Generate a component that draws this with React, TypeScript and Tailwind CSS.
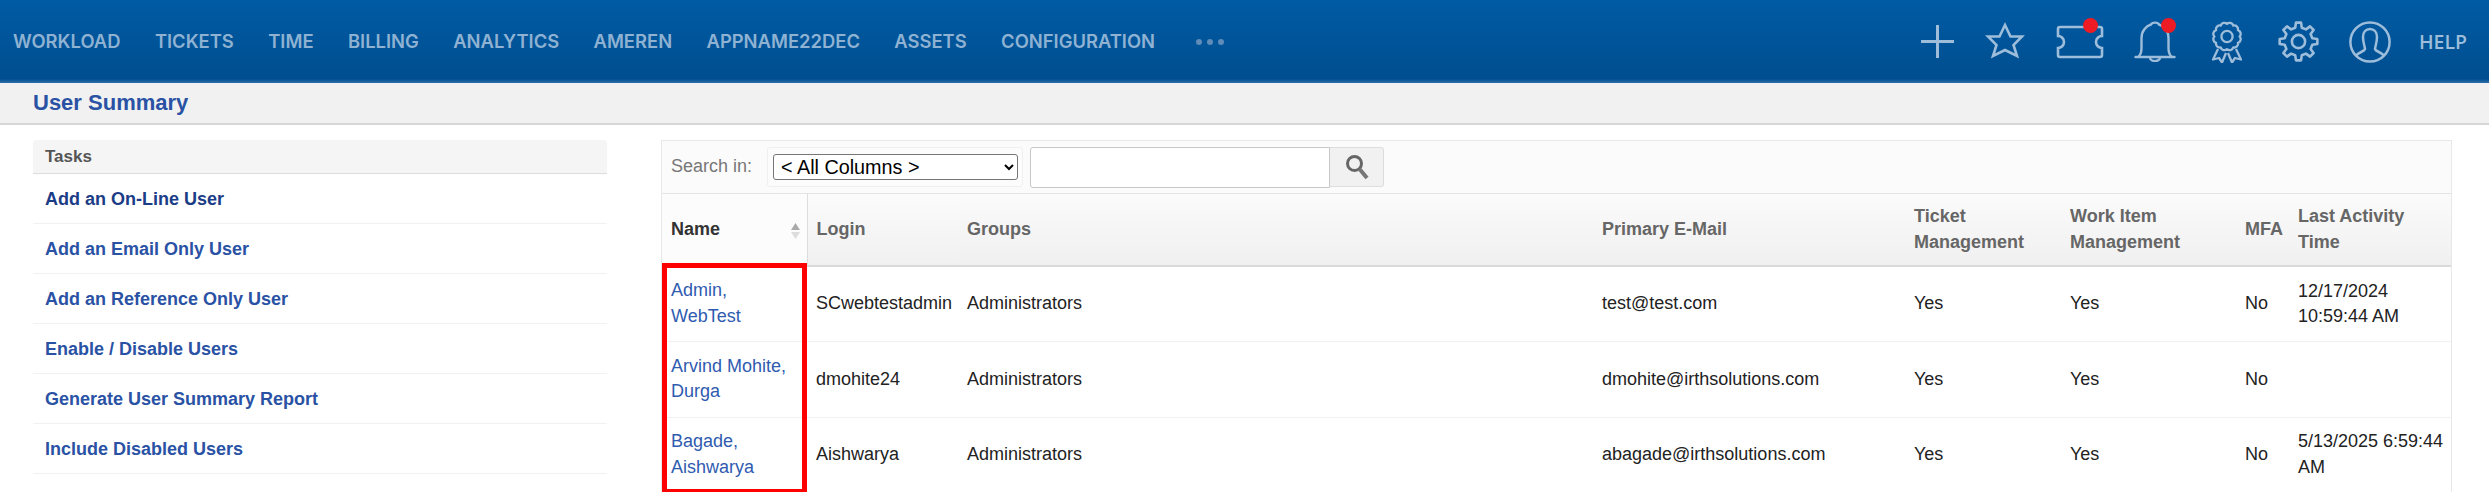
import React from "react"

const navItems = ["WORKLOAD", "TICKETS", "TIME", "BILLING", "ANALYTICS", "AMEREN", "APPNAME22DEC", "ASSETS", "CONFIGURATION"]
const tasks = ["Add an On-Line User", "Add an Email Only User", "Add an Reference Only User", "Enable / Disable Users", "Generate User Summary Report", "Include Disabled Users"]
const users = [
  { name: "Admin, WebTest", login: "SCwebtestadmin", mail: "test@test.com", last: "12/17/2024 10:59:44 AM" },
  { name: "Arvind Mohite, Durga", login: "dmohite24", mail: "dmohite@irthsolutions.com", last: "" },
  { name: "Bagade, Aishwarya", login: "Aishwarya", mail: "abagade@irthsolutions.com", last: "5/13/2025 6:59:44 AM" },
]

// scalloped ring for the award badge
function scallop(cx: number, cy: number, r: number, n: number) {
  let d = ""
  for (let i = 0; i <= n; i++) {
    const a = (i / n) * Math.PI * 2
    const x = (cx + r * Math.cos(a)).toFixed(2)
    const y = (cy + r * Math.sin(a)).toFixed(2)
    d += i == 0 ? `M${x} ${y}` : `A3.8 3.8 0 0 1 ${x} ${y}`
  }
  return d + "Z"
}

function gear(cx: number, cy: number, outer: number, inner: number, n: number) {
  const pts: string[] = []
  const step = (Math.PI * 2) / n
  for (let i = 0; i < n; i++) {
    const a = i * step - Math.PI / 2
    const p = (rad: number, off: number) => `${(cx + rad * Math.cos(a + off)).toFixed(2)} ${(cy + rad * Math.sin(a + off)).toFixed(2)}`
    pts.push(p(inner, -step * 0.3), p(outer, -step * 0.17), p(outer, step * 0.17), p(inner, step * 0.3))
  }
  return "M" + pts.join("L") + "Z"
}

const iconCls = "fill-none stroke-[#9dbdda] block"

function RedDot({ cls }: { cls: string }) {
  return <span className={"absolute w-[15px] h-[15px] rounded-full bg-[#ed1c24] " + cls}></span>
}

function HeaderIcons() {
  return (
    <div className="flex items-center ml-auto pr-[22px]">
      <svg width="33" height="33" viewBox="0 0 33 33" className={iconCls} strokeWidth="3">
        <path d="M16.5 0V33M0 16.5H33" />
      </svg>
      <svg width="40" height="37" viewBox="0 0 40 37" className={iconCls + " ml-[31px] -mt-[2px]"} strokeWidth="2.6" strokeLinejoin="miter">
        <path d="M20 3L25.5 14.5H37L28.5 23L32 34L20 28L8 34L11.5 23L3 14.5H14.5Z" />
      </svg>
      <div className="relative ml-[31px]">
        <svg width="48" height="34" viewBox="0 0 48 34" className={iconCls} strokeWidth="2.6">
          <path d="M4 2H44a2 2 0 0 1 2 2V11a6 6 0 0 0 0 12V30a2 2 0 0 1-2 2H4a2 2 0 0 1-2-2V23a6 6 0 0 0 0-12V4a2 2 0 0 1 2-2Z" />
        </svg>
        <RedDot cls="left-[27px] -top-[7px]" />
      </div>
      <div className="relative ml-[30px]">
        <svg width="42" height="41" viewBox="0 0 42 41" className={iconCls} strokeWidth="2.4" strokeLinecap="round">
          <path d="M5 35C7 33 7.5 30 7.5 27V17C7.5 10 12 5 17 3.5C18 1 24 1 25 3.5C30 5 34.5 10 34.5 17V27C34.5 30 35 33 37 35" />
          <path d="M1.5 36H40.5" />
          <path d="M16 36.5a5 3.6 0 0 0 10 0" />
        </svg>
        <RedDot cls="left-[27px] -top-[3px]" />
      </div>
      <svg width="30" height="42" viewBox="0 0 30 42" className={iconCls + " ml-[36px]"} strokeWidth="2.3" strokeLinejoin="round">
        <path d={scallop(15, 15.5, 12.6, 12)} />
        <circle cx="15" cy="15.5" r="5.6" />
        <path d="M6 28L1 38.5L7 37L10 41.5L14 32" />
        <path d="M24 28L29 38.5L23 37L20 41.5L16 32" />
      </svg>
      <svg width="41" height="41" viewBox="0 0 41 41" className={iconCls + " ml-[36px]"} strokeWidth="2.6" strokeLinejoin="round">
        <path d={gear(20.5, 20.5, 19, 14.2, 8)} />
        <circle cx="20.5" cy="20.5" r="6.6" />
      </svg>
      <svg width="42" height="42" viewBox="0 0 42 42" className={iconCls + " ml-[30px]"} strokeWidth="2.5">
        <circle cx="21" cy="21" r="19.6" />
        <path d="M7 35C9 31 15 31 16 28C16 26 14 22 14 16C14 11 17 8 21 8C25 8 28 11 28 16C28 22 26 26 26 28C27 31 33 31 35 35" />
      </svg>
      <span className="ml-[28px] text-[19.5px] font-semibold text-[#9dbdda] font-['Open_Sans',sans-serif]">HELP</span>
    </div>
  )
}

function SearchBar() {
  return (
    <div className="h-[53px] flex items-center pl-[9px] bg-[#fbfbfb] border-b border-[#e4e4e4]">
      <span className="text-[#777777] w-[96px]">Search in:</span>
      <div className="w-[256px] h-[40px] flex items-center pl-[5px] bg-[#fcfcfc] border border-[#f0f0f0] rounded-[3px]">
        <select className="w-[245px] h-[26px] pl-[3px] bg-white text-black border border-[#767676] rounded-[3px] text-[19.8px] font-['Liberation_Sans',Arial,sans-serif]">
          <option>{"< All Columns >"}</option>
        </select>
      </div>
      <div className="ml-[7px] w-[300px] h-[41px] bg-white border border-[#c8c8c8] rounded-l-[3px]"></div>
      <div className="w-[54px] h-[40px] flex items-center justify-center bg-[#f1f1f1] border border-l-0 border-[#dddddd] rounded-r-[3px]">
        <svg width="24" height="26" viewBox="0 0 24 26" fill="none" className="block">
          <circle cx="9.5" cy="9.5" r="7" stroke="#666666" strokeWidth="3" />
          <path d="M14.5 15L22 24" stroke="#777777" strokeWidth="4" />
        </svg>
      </div>
    </div>
  )
}

function UsersTable() {
  const th = "px-[9px] pr-[14px] text-left align-middle font-bold text-[#666666] bg-[linear-gradient(#fbfbfb,#f0f0f0)] border-b-2 border-[#d9d9d9]"
  const td = "pl-[9px] pr-[2px] align-middle border-b border-[#f1f1f1] text-[#222222]"
  return (
    <table className="w-full table-fixed border-collapse">
      <colgroup>
        <col className="w-[145px]" />
        <col className="w-[151px]" />
        <col className="w-[635px]" />
        <col className="w-[312px]" />
        <col className="w-[156px]" />
        <col className="w-[175px]" />
        <col className="w-[53px]" />
        <col />
      </colgroup>
      <thead>
        <tr className="h-[72px]">
          <th className="relative px-[9px] text-left font-bold text-[#333333] bg-[#fcfcfc] border-r border-[#dddddd]">
            Name
            <svg width="9" height="16" viewBox="0 0 9 16" className="absolute right-[7px] top-[29px]">
              <path d="M4.5 0L9 7H0Z" fill="#aaaaaa" />
              <path d="M4.5 16L9 9H0Z" fill="#dddddd" />
            </svg>
          </th>
          <th className={th}>Login</th>
          <th className={th}>Groups</th>
          <th className={th}>Primary E-Mail</th>
          <th className={th}>Ticket Management</th>
          <th className={th}>Work Item Management</th>
          <th className={th + " !pr-0"}>MFA</th>
          <th className={th}>Last Activity Time</th>
        </tr>
      </thead>
      <tbody>
        {users.map((u) => (
          <tr key={u.login} className="h-[75.5px]">
            <td className={td + " !pr-[9px] !text-[#2f5bb0]"}>{u.name}</td>
            <td className={td}>{u.login}</td>
            <td className={td}>Administrators</td>
            <td className={td}>{u.mail}</td>
            <td className={td}>Yes</td>
            <td className={td}>Yes</td>
            <td className={td}>No</td>
            <td className={td}>{u.last}</td>
          </tr>
        ))}
      </tbody>
    </table>
  )
}

export default function App() {
  return (
    <div className="w-[2489px] h-[492px] overflow-hidden bg-white text-[18px] leading-[25.4px] font-['Liberation_Sans',Arial,sans-serif]">
      <header className="h-[83px] flex items-center bg-[linear-gradient(#005ba4_0px,#004e8f_79px,#2f70ac_83px)]">
        <nav className="flex items-center gap-[34.4px] pl-[13px]">
          {navItems.map((n) => (
            <span key={n} className="text-[18.4px] font-semibold text-[#8fb2d3] font-['Inter',sans-serif]">{n}</span>
          ))}
          <span className="flex gap-[5px] ml-[7px]">
            <i className="block w-[6px] h-[6px] rounded-full bg-[#5f8cb8]"></i>
            <i className="block w-[6px] h-[6px] rounded-full bg-[#5f8cb8]"></i>
            <i className="block w-[6px] h-[6px] rounded-full bg-[#5f8cb8]"></i>
          </span>
        </nav>
        <HeaderIcons />
      </header>
      <div className="h-[42px] flex items-center pl-[33px] pb-[1px] bg-[#f1f1f1] border-b-2 border-[#d6d6d6]">
        <h1 className="text-[22px] font-bold text-[#2a52a4]">User Summary</h1>
      </div>
      <main className="flex items-start pt-[15px] pl-[33px]">
        <aside className="w-[574px]">
          <div className="h-[34px] flex items-center pl-[12px] bg-[#f5f5f5] border-b border-[#dddddd] rounded-t-[3px] text-[17px] font-bold text-[#555555]">Tasks</div>
          {tasks.map((t, i) => (
            <div key={t} className={"h-[50px] flex items-center pl-[12px] pt-[2px] border-b border-[#f1f1f1] font-bold " + (i == 0 ? "text-[#1b3c86]" : "text-[#2a52a4]")}>{t}</div>
          ))}
        </aside>
        <section className="relative w-[1791px] ml-[54px] border-x border-t border-[#e8e8e8]">
          <SearchBar />
          <UsersTable />
          {/* annotation drawn over the name column */}
          <div className="absolute left-0 top-[122px] w-[145px] h-[230px] border-x-[5px] border-t-[5px] border-b-[4px] border-[#ff0000]"></div>
        </section>
      </main>
    </div>
  )
}
